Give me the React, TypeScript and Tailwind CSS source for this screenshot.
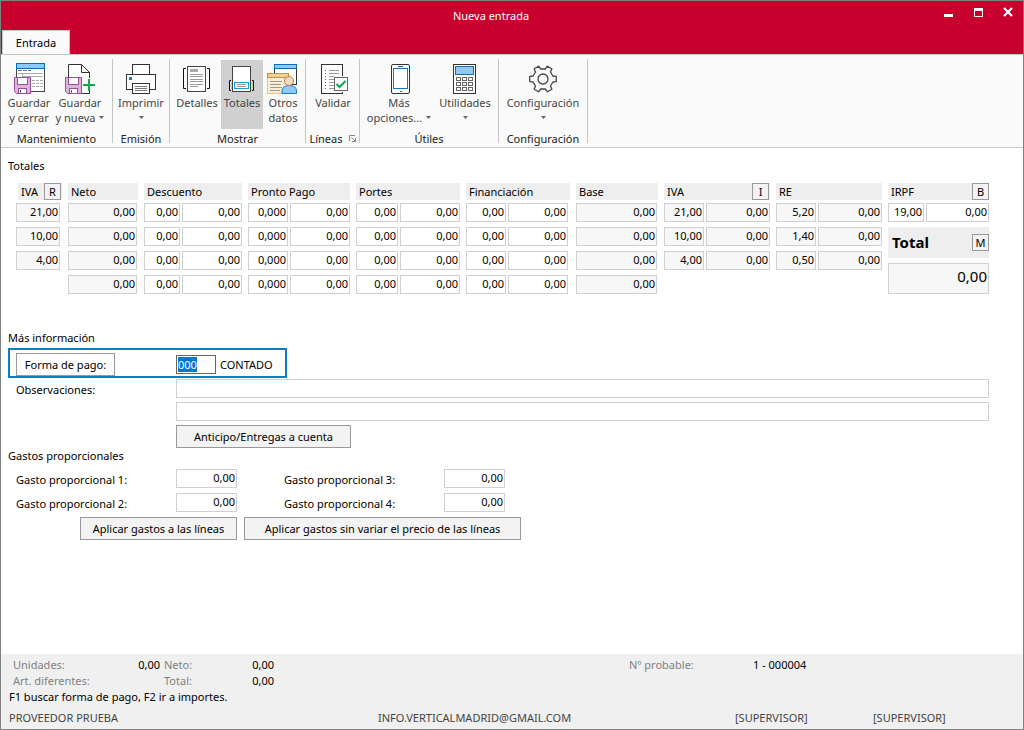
import { useEffect, useRef, type ReactNode } from "react";

/* ---------- icons ---------- */

function Caret() {
  return (
    <svg width="5" height="3" viewBox="0 0 5 3" className="shrink-0" aria-hidden="true">
      <path d="M0 0H5L2.5 3Z" fill="#666" />
    </svg>
  );
}

function Floppy({ x, y }: { x: number; y: number }) {
  return (
    <g transform={`translate(${x} ${y})`}>
      <path d="M.5.5H16.5V16.5H2.5L.5 14.5Z" fill="#dcb3da" stroke="#9b4f9f" />
      <rect x="3.5" y=".5" width="10" height="7" fill="#fff" stroke="#9b4f9f" />
      <rect x="4.5" y="11.5" width="8" height="5" fill="#fff" stroke="#9b4f9f" />
      <path d="M6.5 13V15.5" stroke="#444" />
    </g>
  );
}

function SaveCloseIcon() {
  return (
    <svg width="32" height="32" viewBox="-1 0 32 32" fill="none" aria-hidden="true">
      <rect x="2.5" y=".5" width="28" height="28" fill="#fff" stroke="#444" />
      <rect x="2.5" y=".5" width="28" height="5" fill="#91c9f2" stroke="#0f6ab4" />
      <path d="M4 7.500H17" stroke="#777" strokeDasharray="4 1" />
      <path d="M4 10.500H29M8.500 10V14M8 13.500H29" stroke="#aaa" />
      <path d="M18 17.500H29M18 20.500H29M18 23.500H29" stroke="#aaa" strokeDasharray="3 1" />
      <Floppy x={0} y={14} />
    </svg>
  );
}

function SaveNewIcon() {
  return (
    <svg width="32" height="32" viewBox="0 0 32 32" fill="none" aria-hidden="true">
      <path d="M4.500 15V1.500H17.500L25.500 9.500V30.500H17" fill="#fff" stroke="#333" />
      <path d="M17.500 1.500V9.500H25.500" stroke="#333" />
      <path d="M19 15H31V28H19Z" fill="#fafafa" />
      <path d="M25.500 9V15M25.500 29V31" stroke="#333" />
      <path d="M25 16V28M19 22H31" stroke="#12a84f" strokeWidth="2" />
      <Floppy x={1} y={14} />
    </svg>
  );
}

function PrinterIcon() {
  return (
    <svg width="32" height="32" viewBox="0 0 32 32" fill="none" aria-hidden="true">
      <rect x="7.500" y="1.500" width="17" height="12" fill="#fff" stroke="#333" />
      <rect x="1.500" y="11.500" width="29" height="15" fill="#fff" stroke="#333" />
      <rect x="4" y="14" width="3" height="3" fill="#0f7bd0" />
      <rect x="7.500" y="20.500" width="17" height="10" fill="#fff" stroke="#333" />
      <path d="M10 23.500H22M10 25.500H22M10 27.500H22" stroke="#777" />
    </svg>
  );
}

function DetailsIcon() {
  return (
    <svg width="32" height="32" viewBox="0 0 32 32" fill="none" aria-hidden="true">
      <path d="M5 5.500H2.500V25.500H5M26 5.500H28.500V25.500H26" stroke="#111" />
      <rect x="6.500" y="3.500" width="18" height="25" fill="#fff" stroke="#444" />
      <rect x="9" y="6" width="8" height="3" fill="#aaa" />
      <path d="M9 11.500H22M9 13.500H22M9 16.500H22M9 18.500H22M9 21.500H22M9 23.500H17" stroke="#999" />
    </svg>
  );
}

function TotalsIcon() {
  return (
    <svg width="32" height="32" viewBox="0 0 32 32" fill="none" aria-hidden="true">
      <path d="M5 17.500H3.500V27.500H5M26 17.500H27.500V27.500H26" stroke="#111" />
      <rect x="6.500" y="3.500" width="18" height="25" fill="#fff" stroke="#444" />
      <rect x="8.500" y="19.500" width="14" height="6" fill="#fff" stroke="#109fe0" />
      <path d="M11 21.500H20M11 23.500H20" stroke="#999" />
    </svg>
  );
}

function OtherDataIcon() {
  return (
    <svg width="32" height="32" viewBox="1 0 32 32" fill="none" aria-hidden="true">
      <rect x="8.500" y="1.500" width="22" height="20" fill="#fff" stroke="#333" />
      <rect x="8.500" y="1.500" width="22" height="4" fill="#91c9f2" stroke="#0f6ab4" />
      <rect x="1.500" y="10.500" width="21" height="20" fill="#fbefd2" stroke="#e8c08a" />
      <rect x="1.500" y="10.500" width="21" height="4" fill="#f8cf8c" stroke="#e0862c" />
      <path d="M4 18.500H16M4 21.500H15M4 24.500H16M4 27.500H14" stroke="#999" />
      <path d="M16 30.500V28C16 24.500 19 22.500 23.500 22.500S30.500 24.500 30.500 28V30.500Z" fill="#91c9f2" stroke="#1d7ac2" />
      <circle cx="23" cy="18" r="4.500" fill="#f9dcc2" stroke="#bd7b4c" />
    </svg>
  );
}

function ValidateIcon() {
  return (
    <svg width="32" height="32" viewBox="0 0 32 32" fill="none" aria-hidden="true">
      <rect x="4.500" y="1.500" width="21" height="29" fill="#fff" stroke="#333" />
      <path d="M12 7.500H22M12 10.500H22M12 13.500H22M12 16.500H22M12 19.500H18M12 22.500H18M12 25.500H18" stroke="#999" />
      <path d="M8.500 7V8M8.500 13V14M8.500 19V20M8.500 25V26" stroke="#12a84f" />
      <path d="M8.500 10V11M8.500 16V17M8.500 22V23" stroke="#d22" />
      <rect x="17" y="13" width="15" height="16" fill="#fafafa" />
      <rect x="17.500" y="14.500" width="13" height="13" fill="#fff" stroke="#666" />
      <path d="M19.500 21L22.500 24L28.500 18" stroke="#12a84f" strokeWidth="2" />
    </svg>
  );
}

function PhoneIcon() {
  return (
    <svg width="32" height="32" viewBox="0 0 32 32" fill="none" aria-hidden="true">
      <rect x="8.500" y="1.500" width="18" height="29" rx="1.500" fill="#fff" stroke="#333" />
      <rect x="10.500" y="5.500" width="14" height="20" fill="#fff" stroke="#0f7bd0" />
      <path d="M15 3.500H20M17 28.500H19" stroke="#555" />
    </svg>
  );
}

function CalculatorIcon() {
  return (
    <svg width="32" height="32" viewBox="0 0 32 32" fill="none" aria-hidden="true">
      <rect x="4.500" y="1.500" width="22" height="29" fill="#fff" stroke="#333" />
      <rect x="6.500" y="3.500" width="18" height="8" fill="#91c9f2" stroke="#0f6ab4" />
      {[14, 19, 24].map((y) =>
        [7, 13, 19].map((x) => (
          <rect key={`${x}-${y}`} x={x + 0.5} y={y + 0.5} width="4" height="3" stroke="#666" />
        )),
      )}
    </svg>
  );
}

function GearIcon() {
  return (
    <svg width="32" height="32" viewBox="0 0 32 32" fill="none" stroke="#444" strokeWidth="1.300" strokeLinejoin="round" aria-hidden="true">
      <path d="M25.9 13L29.25 13.4V18.6L25.9 19L23.5 23L24.9 26.2L20.4 28.8L18.3 26H13.7L11.6 28.8L7.1 26.2L8.5 23L6.1 19L2.75 18.6V13.4L6.1 13L8.5 9L7.1 5.8L11.6 3.2L13.7 6H18.3L20.4 3.2L24.9 5.8L23.5 9Z" />
      <circle cx="16" cy="16" r="5" />
    </svg>
  );
}

/* ---------- ribbon ---------- */

type ToolProps = {
  icon: ReactNode;
  lines: string[];
  width: string;
  menu?: boolean;
  active?: boolean;
};

function Tool({ icon, lines, width, menu, active }: ToolProps) {
  const inlineCaret = menu && lines.length > 1;
  return (
    <button
      type="button"
      aria-pressed={active}
      className={`flex h-[69px] flex-col items-center pt-[3px] leading-[15px] text-[#444] ${width} ${
        active ? "bg-[#d0d0d0]" : "hover:bg-[#e6e6e6]"
      }`}
    >
      {icon}
      {lines.map((line, i) => (
        <span key={line} className="flex items-center gap-1 whitespace-nowrap">
          {line}
          {inlineCaret && i === lines.length - 1 && <Caret />}
        </span>
      ))}
      {menu && !inlineCaret && (
        <span className="flex h-[15px] items-center">
          <Caret />
        </span>
      )}
    </button>
  );
}

type GroupProps = { title: string; width: string; children: ReactNode; launcher?: boolean; bodyPad?: string };

function Group({ title, width, children, launcher, bodyPad = "" }: GroupProps) {
  return (
    <section aria-label={title} className={`flex h-[84px] shrink-0 flex-col border-r border-[#c6c6c6] pt-px ${width}`}>
      <div className={`flex justify-center ${bodyPad}`}>{children}</div>
      <div className="flex items-center justify-center gap-1.5 pt-0.5 leading-[15px] text-[#222]">
        {title}
        {launcher && (
          <button type="button" aria-label="Opciones de líneas">
            <svg width="7" height="7" viewBox="0 0 7 7" fill="none" stroke="#888">
              <path d="M.5 6V.5H6M2.500 2.500L6 6M6.500 3V6.500H3" />
            </svg>
          </button>
        )}
      </div>
    </section>
  );
}

/* ---------- form parts ---------- */

type FieldProps = { value?: string; label: string; width?: string; readOnly?: boolean };

function Field({ value = "", label, width = "flex-1", readOnly }: FieldProps) {
  return (
    <input
      aria-label={label}
      defaultValue={value}
      readOnly={readOnly}
      className={`h-[19px] min-w-0 border border-[#d0d0d0] px-px pb-0.5 text-right outline-none ${width} ${
        readOnly ? "bg-[#f7f7f7]" : "bg-white"
      }`}
    />
  );
}

function KeyButton({ letter, label }: { letter: string; label: string }) {
  return (
    <button type="button" aria-label={label} className="flex size-[17px] items-center justify-center border border-[#999] bg-[#f3f3f3] pb-px leading-none">
      {letter}
    </button>
  );
}

function Header({ title, letter, spacing = "pl-[3px]" }: { title: string; letter?: string; spacing?: string }) {
  return (
    <div className={`mb-[3px] flex h-[17px] items-center justify-between bg-[#eee] ${spacing}`}>
      <h3>{title}</h3>
      {letter && <KeyButton letter={letter} label={`${title} ${letter}`} />}
    </div>
  );
}

type Column = {
  title: string;
  letter?: string;
  rates?: string[];
  rateWidth?: string;
  amounts?: string[];
  readOnly?: boolean;
  pad?: string;
  headerSpacing?: string;
};

const zeros = ["0,00", "0,00", "0,00", "0,00"];
const three = zeros.slice(1);

const columns: Column[] = [
  { title: "IVA", letter: "R", amounts: ["21,00", "10,00", "4,00"], readOnly: true, pad: "pr-0.5", headerSpacing: "ml-0.5 pl-[3px] pr-px" },
  { title: "Neto", amounts: zeros, readOnly: true, pad: "pr-px" },
  { title: "Descuento", rates: zeros, rateWidth: "w-9", amounts: zeros },
  { title: "Pronto Pago", rates: ["0,000", "0,000", "0,000", "0,000"], rateWidth: "w-10", amounts: zeros },
  { title: "Portes", rates: zeros, rateWidth: "w-[42px]", amounts: zeros },
  { title: "Financiación", rates: zeros, rateWidth: "w-10", amounts: zeros, pad: "pr-0.5" },
  { title: "Base", amounts: zeros, readOnly: true, pad: "pr-px" },
  { title: "IVA", letter: "I", rates: ["21,00", "10,00", "4,00"], rateWidth: "w-10", amounts: three, readOnly: true, headerSpacing: "pl-[3px] pr-px" },
  { title: "RE", rates: ["5,20", "1,40", "0,50"], rateWidth: "w-10", amounts: three, readOnly: true },
];

function ColumnGroup({ title, letter, rates, rateWidth, amounts = [], readOnly, pad = "", headerSpacing }: Column) {
  return (
    <section aria-label={title} className="min-w-0">
      <Header title={title} letter={letter} spacing={headerSpacing} />
      <div className={`flex flex-col gap-[5px] ${pad}`}>
        {amounts.map((amount, i) => (
          <div key={i} className="flex gap-0.5">
            {rates && <Field label={`${title} % ${i + 1}`} value={rates[i]} width={rateWidth} readOnly={readOnly} />}
            <Field label={`${title} ${i + 1}`} value={amount} readOnly={readOnly} />
          </div>
        ))}
      </div>
    </section>
  );
}

function PushButton({ children, style }: { children: ReactNode; style: string }) {
  return (
    <button type="button" className={`h-[23px] border border-[#999] whitespace-nowrap hover:bg-[#e6e6e6] ${style}`}>
      {children}
    </button>
  );
}

function Expense({ n }: { n: number }) {
  const id = `gasto-${n}`;
  return (
    <>
      <label htmlFor={id} className="pt-[3px] leading-[15px]">
        Gasto proporcional {n}:
      </label>
      <input id={id} defaultValue="0,00" className="h-[19px] w-full min-w-0 border border-[#d0d0d0] bg-white px-px pb-0.5 text-right outline-none" />
    </>
  );
}

/* ---------- window ---------- */

export default function App() {
  const payment = useRef<HTMLInputElement>(null);

  useEffect(() => {
    payment.current?.focus();
    payment.current?.select();
  }, []);

  return (
    <div className="flex min-h-screen flex-col border border-[#808080] bg-white font-['Noto_Sans','Open_Sans',sans-serif] text-[11px] leading-[15px] text-black">
      <header className="bg-[#c8002d]">
        <div className="grid h-[29px] grid-cols-[1fr_auto_1fr] items-center text-white">
          <h1 className="col-start-2 pr-[42px]">Nueva entrada</h1>
          <div className="flex items-center justify-end gap-5 pr-2.5 pb-2">
            <button type="button" aria-label="Minimizar">
              <svg width="10" height="10" viewBox="0 0 10 10"><path d="M1 7H10V10H1Z" fill="#fff" /></svg>
            </button>
            <button type="button" aria-label="Maximizar">
              <svg width="10" height="10" viewBox="0 0 10 10"><path d="M1 1H10V10H1ZM2 4V9H9V4Z" fill="#fff" fillRule="evenodd" /></svg>
            </button>
            <button type="button" aria-label="Cerrar">
              <svg width="10" height="10" viewBox="0 0 10 10"><path d="M1 1L9 9M9 1L1 9" stroke="#fff" strokeWidth="2.200" /></svg>
            </button>
          </div>
        </div>
        <nav className="flex pl-px">
          <button type="button" className="h-6 w-[68px] border border-b-0 border-[#c6c6c6] bg-[#fafafa]">
            Entrada
          </button>
        </nav>
      </header>

      <div className="flex h-[94px] overflow-hidden border-y border-[#c6c6c6] bg-[#fafafa] pt-1">
        <Group title="Mantenimiento" width="w-28" bodyPad="pr-[3px]">
          <Tool icon={<SaveCloseIcon />} lines={["Guardar", "y cerrar"]} width="w-[50px]" />
          <Tool icon={<SaveNewIcon />} lines={["Guardar", "y nueva"]} width="w-[52px]" menu />
        </Group>
        <Group title="Emisión" width="w-[57px]">
          <Tool icon={<PrinterIcon />} lines={["Imprimir"]} width="w-[52px]" menu />
        </Group>
        <Group title="Mostrar" width="w-[136px]">
          <Tool icon={<DetailsIcon />} lines={["Detalles"]} width="w-12" />
          <Tool icon={<TotalsIcon />} lines={["Totales"]} width="w-[42px]" active />
          <Tool icon={<OtherDataIcon />} lines={["Otros", "datos"]} width="w-[39px] pl-px" />
        </Group>
        <Group title="Líneas" width="w-[54px]" bodyPad="pl-px" launcher>
          <Tool icon={<ValidateIcon />} lines={["Validar"]} width="w-11" />
        </Group>
        <Group title="Útiles" width="w-[139px]">
          <Tool icon={<PhoneIcon />} lines={["Más", "opciones..."]} width="w-[72px]" menu />
          <Tool icon={<CalculatorIcon />} lines={["Utilidades"]} width="w-[60px]" menu />
        </Group>
        <Group title="Configuración" width="w-[89px]">
          <Tool icon={<GearIcon />} lines={["Configuración"]} width="w-20" menu />
        </Group>
      </div>

      <main className="flex-1 pt-2.5 pr-[34px] pb-4 pl-[7px]">
        <h2>Totales</h2>
        <div className="mt-2.5 grid grid-cols-[46fr_70fr_98fr_102fr_104fr_104fr_82fr_106fr_106fr_101fr] gap-x-1.5 pl-2">
          {columns.map((column, i) => (
            <ColumnGroup key={i} {...column} />
          ))}
          <section aria-label="IRPF" className="min-w-0">
            <Header title="IRPF" letter="B" />
            <div className="flex gap-0.5">
              <Field label="IRPF %" value="19,00" width="w-9" />
              <Field label="IRPF importe" value="0,00" />
            </div>
            <div className="mt-[5px] flex h-[31px] items-center justify-between bg-[#eee] pl-1">
              <h3 className="text-[15px] font-bold">Total</h3>
              <KeyButton letter="M" label="Total M" />
            </div>
            <input
              aria-label="Total"
              readOnly
              defaultValue="0,00"
              className="mt-[5px] block h-[31px] w-full border border-[#d0d0d0] bg-[#f7f7f7] px-px pb-1.5 text-right text-[15px] outline-none"
            />
          </section>
        </div>

        <h2 className="mt-9">Más información</h2>
        <div className="mt-[3px] flex h-[30px] w-[279px] items-center border-2 border-[#0a7fc4] pt-0.5 pl-1.5">
          <PushButton style="w-[99px] bg-white">Forma de pago:</PushButton>
          <input
            ref={payment}
            aria-label="Forma de pago"
            defaultValue="000"
            className="ml-[61px] h-[19px] w-10 border border-[#666] bg-white px-px outline-none selection:bg-[#0078d7] selection:text-white"
          />
          <span className="ml-1">CONTADO</span>
        </div>

        <div className="mt-px flex pl-2">
          <label htmlFor="obs-1" className="w-40 shrink-0 pt-[3px]">
            Observaciones:
          </label>
          <div className="flex flex-1 flex-col gap-1">
            <input id="obs-1" className="h-[19px] w-full border border-[#d0d0d0] px-0.5 outline-none" />
            <input aria-label="Observaciones, segunda línea" className="h-[19px] w-full border border-[#d0d0d0] px-0.5 outline-none" />
            <PushButton style="w-[175px] bg-[#f3f3f3]">Anticipo/Entregas a cuenta</PushButton>
          </div>
        </div>

        <h2>Gastos proporcionales</h2>
        <div className="mt-1.5 grid grid-cols-[160px_61px_207px_61px] gap-y-[5px] pl-2 [&>label:nth-of-type(even)]:pl-[47px]">
          <Expense n={1} />
          <Expense n={3} />
          <Expense n={2} />
          <Expense n={4} />
        </div>
        <div className="mt-[5px] flex gap-[7px] pl-[72px]">
          <PushButton style="w-[157px] bg-[#f3f3f3]">Aplicar gastos a las líneas</PushButton>
          <PushButton style="w-[277px] bg-[#f3f3f3]">Aplicar gastos sin variar el precio de las líneas</PushButton>
        </div>
      </main>

      <footer className="bg-[#f0f0f0] pt-[3px] pb-[3px] pl-2">
        <dl className="grid grid-cols-[104fr_47fr_67fr_47fr_355fr_124fr_270fr] leading-4 text-[#808080] [&>dd]:text-black">
          <dt className="pl-1">Unidades:</dt>
          <dd className="text-right">0,00</dd>
          <dt className="pl-1">Neto:</dt>
          <dd className="text-right">0,00</dd>
          <dt className="col-start-6">Nº probable:</dt>
          <dd>1 - 000004</dd>
          <dt className="pl-1">Art. diferentes:</dt>
          <dt className="col-start-3 pl-1">Total:</dt>
          <dd className="text-right">0,00</dd>
        </dl>
        <p className="leading-4">F1 buscar forma de pago, F2 ir a importes.</p>
        <div className="mt-[5px] grid grid-cols-[369fr_357fr_138fr_150fr] leading-4 text-[#444]">
          <span>PROVEEDOR PRUEBA</span>
          <span>INFO.VERTICALMADRID@GMAIL.COM</span>
          <span>[SUPERVISOR]</span>
          <span>[SUPERVISOR]</span>
        </div>
      </footer>
    </div>
  );
}
